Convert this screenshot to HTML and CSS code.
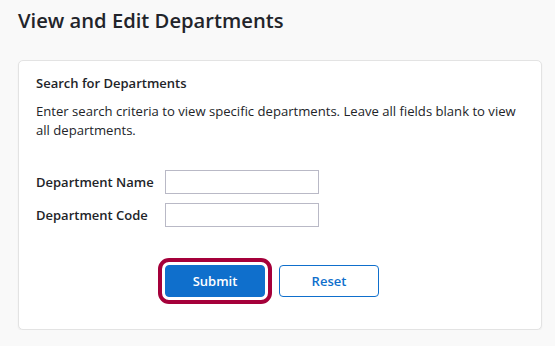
FILE: index.html
```html
<!DOCTYPE html>
<html lang="en">
<head>
<meta charset="utf-8">
<title>View and Edit Departments</title>
<link rel="stylesheet" href="styles.css">
</head>
<body>
<main class="page">
  <h1 class="title">View and Edit Departments</h1>
  <section class="card">
    <h2 class="card-title">Search for Departments</h2>
    <p class="intro">Enter search criteria to view specific departments. Leave all fields blank to view all departments.</p>
    <form class="form">
      <div class="row">
        <label class="label" for="dname">Department Name</label>
        <input class="input" id="dname" type="text">
      </div>
      <div class="row">
        <label class="label" for="dcode">Department Code</label>
        <input class="input" id="dcode" type="text">
      </div>
      <div class="actions">
        <button type="button" class="btn btn-primary is-focused">Submit</button>
        <button type="button" class="btn btn-secondary">Reset</button>
      </div>
    </form>
  </section>
</main>
</body>
</html>
```
FILE: styles.css
```css
* { box-sizing: border-box; }
html, body { margin: 0; padding: 0; }
body {
  background: #f9f9f9;
  font-family: "Open Sans", "Noto Sans", "Liberation Sans", sans-serif;
  color: #222428;
}
.page {
  padding: 7px 13px 0 18px;
}
.title {
  margin: 0;
  font-size: 20.2px;
  font-weight: 650;
  line-height: 27px;
  color: #22242a;
}
.card {
  margin-top: 26px;
  background: #fff;
  border: 1px solid #e3e3e3;
  border-radius: 5px;
  box-shadow: 0 1px 2px rgba(0,0,0,0.06);
  padding: 13px 17px 22px 17px;
  height: 270px;
}
.card-title {
  margin: 0;
  font-size: 13px;
  font-weight: 650;
  line-height: 18px;
}
.intro {
  margin: 10px 0 0 0;
  font-size: 13.1px;
  line-height: 19px;
}
.form {
  margin-top: 30px;
  display: flex;
  flex-direction: column;
  gap: 9px;
}
.row {
  display: flex;
  align-items: center;
  gap: 10px;
}
.label {
  flex: 0 0 119px;
  white-space: nowrap;
  font-size: 13px;
  font-weight: 650;
}
.input {
  width: 154px;
  height: 24px;
  border: 1px solid #b9b9c6;
  border-radius: 0;
  background: #fff;
  padding: 2px 6px;
  font: inherit;
}
.actions {
  margin-top: 29px;
  display: flex;
  gap: 14px;
  padding-left: 129px;
}
.btn {
  width: 100px;
  height: 32px;
  border-radius: 4px;
  font-family: inherit;
  font-size: 13px;
  font-weight: 650;
  cursor: pointer;
}
.btn-primary {
  background: #0f6fcc;
  color: #fff;
  border: 1px solid #0f6fcc;
}
.btn-secondary {
  background: #fff;
  color: #0f6fcc;
  border: 1px solid #0f6fcc;
}
.is-focused {
  outline: 4px solid #a5003a;
  outline-offset: 3px;
  border-radius: 4px;
}
```
